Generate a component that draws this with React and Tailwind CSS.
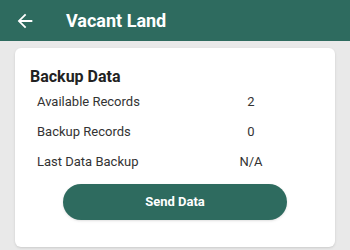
const rows = [
  { label: 'Available Records', value: '2' },
  { label: 'Backup Records', value: '0' },
  { label: 'Last Data Backup', value: 'N/A' },
]

function BackIcon() {
  return (
    <svg width="22" height="22" viewBox="0 0 24 24" fill="currentColor">
      <path d="M20 11H7.83l5.59-5.59L12 4l-8 8 8 8 1.41-1.41L7.83 13H20v-2z" />
    </svg>
  )
}

export default function App() {
  return (
    <div className="h-[250px] w-[350px] overflow-hidden bg-[#e9e9e9] font-['Roboto',sans-serif]">
      <header className="flex h-[41px] items-center bg-[#2e6b5f] pl-[14px] text-white">
        <BackIcon />
        <h1 className="ml-[30px] text-[18px] font-bold">Vacant Land</h1>
      </header>

      <div className="mx-[15px] mt-[7px] rounded-md bg-white px-[15px] pb-[27px] pt-[19px] shadow-sm">
        <h2 className="text-[16px] font-bold leading-5 text-[#222]">Backup Data</h2>
        <div className="pl-[7px]">
          {rows.map((r) => (
            <div key={r.label} className="flex h-[30px] items-center text-[13px] text-[#333]">
              <span className="w-[164px]">{r.label}</span>
              <span className="w-[100px] text-center">{r.value}</span>
            </div>
          ))}
        </div>
        <button className="mx-auto mt-[7px] flex h-9 w-[224px] items-center justify-center rounded-full bg-[#2e6b5f] text-[13px] font-bold text-white shadow">
          Send Data
        </button>
      </div>
    </div>
  )
}
